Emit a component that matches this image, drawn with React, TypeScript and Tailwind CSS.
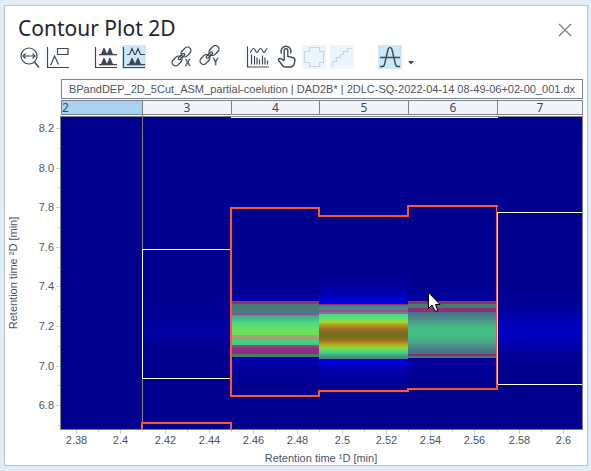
import type { ReactNode } from "react";

const ink = "#3c4856";

function ToolButton({
  label,
  active = false,
  disabled = false,
  children,
}: {
  label: string;
  active?: boolean;
  disabled?: boolean;
  children: ReactNode;
}) {
  const tone = active ? "bg-[#cbe7f8]" : disabled ? "bg-[#ebf5fb]" : "bg-transparent";
  return (
    <button type="button" aria-label={label} disabled={disabled} className={`size-6 shrink-0 ${tone}`}>
      <svg
        viewBox="0 0 24 24"
        className="block size-6"
        fill="none"
        stroke={disabled ? "#c9d6df" : ink}
        strokeWidth={1.2}
      >
        {children}
      </svg>
    </button>
  );
}

const frame = <path d="M1.5 2V22.5H23" />;

function PeakPair({ y }: { y: number }) {
  return (
    <g stroke="none" fill={ink}>
      <path d={`M6.5 ${y}L7.5 ${y - 1.5}L9.5 ${y - 6.5}H10.5L12.5 ${y - 2}L13.5 ${y}z`} />
      <path d={`M12.5 ${y}L13.5 ${y - 2}L15.5 ${y - 6.5}H16.5L18.5 ${y - 1.5}L19.5 ${y}z`} />
      <path d={`M5 ${y - 0.5}H23V${y + 0.8}H5z`} />
    </g>
  );
}

function Chain({ axis, y }: { axis: string; y: number }) {
  return (
    <g transform={`translate(0 ${y})`}>
      <g strokeWidth="1.3">
        <rect x="-5.5" y="-3.5" width="11" height="7" rx="3.5" transform="translate(16 7) rotate(-45)" />
        <rect x="-5.5" y="-3.5" width="11" height="7" rx="3.5" transform="translate(7 16) rotate(-45)" />
        <rect x="-4" y="-1.3" width="8" height="2.6" rx="1.3" transform="translate(11.5 11.5) rotate(-45)" />
      </g>
      <text
        x="15"
        y="21"
        fontSize="9"
        fill={ink}
        stroke={ink}
        strokeWidth="0.4"
        fontFamily="'Noto Sans', sans-serif"
      >
        {axis}
      </text>
    </g>
  );
}

function Toolbar() {
  return (
    <div className="flex gap-6 pl-[13px]">
      <div className="flex gap-1">
        <ToolButton label="Zoom width">
          <circle cx="11" cy="11" r="8" />
          <path d="M5 11H17M7.5 8.5L5 11L7.5 13.5M14.5 8.5L17 11L14.5 13.5" />
          <path d="M16.5 17L21 22.5" strokeWidth="1.5" />
        </ToolButton>
        <ToolButton label="Annotations">
          {frame}
          <path d="M4 19.500H5L8.500 11L12.500 19.500M11.500 3.500H22V9.500H11.500z" />
        </ToolButton>
      </div>
      <div className="flex gap-1">
        <ToolButton label="Filled peaks">
          {frame}
          <PeakPair y={9.5} />
          <PeakPair y={19.5} />
        </ToolButton>
        <ToolButton label="Overlay peaks" active>
          {frame}
          <path d="M5 9.500H7.500L10 3.500L12.500 9.500H13.500L16 3.500L18.500 9.500H23" />
          <PeakPair y={19.5} />
        </ToolButton>
      </div>
      <div className="flex gap-1">
        <ToolButton label="Link X axis">
          <Chain axis="X" y={0} />
        </ToolButton>
        <ToolButton label="Link Y axis">
          <Chain axis="Y" y={-1.5} />
        </ToolButton>
      </div>
      <div className="flex gap-1">
        <ToolButton label="Spectra">
          <path d="M1.500 1.500V22H23" />
          <path d="M4 7.500C5.500 7.500 5.500 3.500 7.500 3.500S9.500 7.500 11 7.500S12.500 3.500 14.500 3.500S16.500 7.500 18 7.500S19.500 3.500 21.500 3.500" />
          <path d="M5.500 9.500V19.500M8.500 11V19.500M11 12.500V19.500M13.500 14.500V19.500M16.500 10.500V19.500M19 12.500V19.500M21.500 15.500V19.500" />
        </ToolButton>
        <ToolButton label="Touch selection">
          <path d="M7.500 8.500A5 5 0 1 1 16.500 8.500" strokeWidth="1.4" />
          <path
            strokeWidth="1.4"
            d="M10.200 15V5.500Q10.200 3.800 12 3.800T13.800 5.500V11.500L18.500 12.500Q21 13 21 15.500L20 19.500Q19 22 16.500 22H11.500Q9.500 22 8.500 20.500L4.500 15.500Q4 13.500 6 13.500T10.200 16"
          />
        </ToolButton>
        <ToolButton label="Merge region" disabled>
          <path d="M7.500 2.500H17.500V6.500H21.500V17.500H17.500V21.500H7.500V17.500H2.500V6.500H7.500z" />
        </ToolButton>
        <ToolButton label="Step region" disabled>
          <path d="M2.500 21.500V16.500H6.500V12.500H10.500V9.500H13.500V6.500H17.500V3.500H22" />
        </ToolButton>
      </div>
      <div className="flex items-end gap-[6px]">
        <ToolButton label="Peak detection" active>
          <path
            strokeWidth="1.4"
            d="M2 21.500H4.500Q6 21.500 6.500 19.500L10 4.500Q10.500 2.500 12 2.500T14 4.500L17.500 19.500Q18 21.500 19.500 21.500H22M2 12.500H22"
          />
        </ToolButton>
        <button type="button" aria-label="Peak detection options" className="pb-1">
          <svg viewBox="0 0 6 4" className="block h-1 w-1.5" fill={ink}>
            <path d="M0 0H6L3 3.500z" />
          </svg>
        </button>
      </div>
    </div>
  );
}

type Stop = [number, string];

const halos: { id: string; x: number; w: number; stops: Stop[] }[] = [
  { id: "h3", x: 143, w: 88, stops: [[290, "#00008f"], [318, "#00009a"], [330, "#0000a4"], [342, "#00009a"], [360, "#00008f"]] },
  { id: "h4", x: 231, w: 88, stops: [[270, "#00008f"], [290, "#000096"], [301, "#0000ac"], [357, "#0000b8"], [368, "#00009c"], [390, "#00008f"]] },
  { id: "h5", x: 319, w: 89, stops: [[262, "#000090"], [284, "#00009c"], [295, "#0000b8"], [304, "#0000f2"], [359, "#0000f2"], [368, "#0000b0"], [388, "#00008f"]] },
  { id: "h6", x: 408, w: 89, stops: [[262, "#00008f"], [285, "#000094"], [301, "#0000a0"], [357, "#0000a8"], [372, "#000096"], [390, "#00008f"]] },
  { id: "h7", x: 497, w: 85, stops: [[285, "#00008f"], [308, "#00009c"], [320, "#0000b4"], [331, "#0000c6"], [342, "#0000b4"], [355, "#000096"], [370, "#00008f"]] },
];

const peaks: { id: string; x: number; w: number; stops: Stop[] }[] = [
  {
    id: "p4", x: 231, w: 88,
    stops: [
      [301, "#96305c"], [304, "#8c3078"], [304, "#467c6c"], [309, "#487a82"], [314, "#467e82"],
      [314, "#8a4c94"], [315, "#8a4c94"], [315, "#44a484"], [323, "#44da86"], [328, "#66e060"],
      [335, "#6ede5c"], [335, "#a0a868"], [340, "#a89880"], [340, "#48da78"], [345, "#46c486"],
      [345, "#8c5490"], [349, "#8e2e80"], [354, "#8e2e80"], [354, "#467c6c"], [357, "#487c74"],
    ],
  },
  {
    id: "p5", x: 319, w: 89,
    stops: [
      [304, "#902c70"], [305, "#902c70"], [305, "#467c80"], [310, "#489484"], [310, "#8c4c90"],
      [314, "#8e7494"], [314, "#40d48c"], [319, "#64e46c"], [322, "#a8d82c"], [325, "#b09c24"],
      [329, "#a86c20"], [333, "#74701e"], [337, "#74701e"], [341, "#a86e20"], [345, "#b0b422"],
      [348, "#84dc40"], [352, "#44dc84"], [355, "#46a884"], [359, "#487c80"],
    ],
  },
  {
    id: "p6", x: 408, w: 89,
    stops: [
      [301, "#96305c"], [304, "#902e74"], [304, "#467c6c"], [308, "#467c6c"], [308, "#902e7c"],
      [312, "#902e7c"], [312, "#48708a"], [319, "#489088"], [328, "#44bc86"], [336, "#44be86"],
      [344, "#489c88"], [351, "#48748a"], [354, "#487088"], [354, "#902e74"], [356, "#902e74"],
      [356, "#467c6c"], [358, "#467c6c"],
    ],
  },
];

function Band({ id, x, w, stops }: { id: string; x: number; w: number; stops: Stop[] }) {
  const top = stops[0][0];
  const bottom = stops[stops.length - 1][0];
  return (
    <>
      <linearGradient id={id} gradientUnits="userSpaceOnUse" x1="0" x2="0" y1={top} y2={bottom}>
        {stops.map(([y, color], i) => (
          <stop key={i} offset={(y - top) / (bottom - top)} stopColor={color} />
        ))}
      </linearGradient>
      <rect x={x} y={top} width={w} height={bottom - top} fill={`url(#${id})`} />
    </>
  );
}

const xLabels = ["2.38", "2.4", "2.42", "2.44", "2.46", "2.48", "2.5", "2.52", "2.54", "2.56", "2.58", "2.6"];
const yLabels = ["8.2", "8.0", "7.8", "7.6", "7.4", "7.2", "7.0", "6.8"];
const xAt = (i: number) => Math.round(76 + i * 44.27) + 0.5;
const yAt = (i: number) => Math.round(128 + i * 39.6) + 0.5;

function ContourChart() {
  return (
    <svg
      viewBox="5 115 582 350"
      className="block h-auto w-full"
      fontFamily="'Liberation Sans', Arial, sans-serif"
      fontSize="11"
      role="img"
      aria-label="Contour Plot 2D"
    >
      <g shapeRendering="crispEdges">
        <rect x="60" y="116" width="523" height="314" fill="#7d8290" />
        <rect x="61" y="117" width="521" height="312" fill="#00008f" />
        {halos.map((b) => (
          <Band key={b.id} {...b} />
        ))}
        {peaks.map((b) => (
          <Band key={b.id} {...b} />
        ))}
        <path d="M142.500 115V429" stroke="#808080" />
        <g fill="none" stroke="#ffffff">
          <path d="M231 249.500H142.500V378.500H231" />
          <path d="M582 212.500H497.500V384.500H582" />
          <path d="M231 117.500H498" />
        </g>
        <g fill="none" stroke="#ff5533" strokeWidth="2">
          <path d="M497 207V206H408V216H319V208H231V396H319V391H408V389H497V384" />
          <path d="M142 429V423H231V429" />
        </g>
        <path d="M496.500 206V389" stroke="#ff5533" />
        <g stroke="#c9d0d8">
          {xLabels.map((t, i) => (
            <path key={t} d={`M${xAt(i)} 430V434${i < 11 ? `M${xAt(i + 0.5)} 430V432` : ""}`} />
          ))}
          {yLabels.map((t, i) => (
            <path key={t} d={`M56 ${yAt(i)}H60M58 ${yAt(i + 0.5)}H60`} />
          ))}
        </g>
      </g>
      <g fill="#4c5566">
        {xLabels.map((t, i) => (
          <text key={t} x={xAt(i)} y="444" textAnchor="middle">
            {t}
          </text>
        ))}
        {yLabels.map((t, i) => (
          <text key={t} x="54" y={yAt(i) + 3.5} textAnchor="end">
            {t}
          </text>
        ))}
        <text x="321" y="462" textAnchor="middle">
          Retention time ¹D [min]
        </text>
        <text transform="translate(17 273) rotate(-90)" textAnchor="middle">
          Retention time ²D [min]
        </text>
      </g>
      <path
        d="M428.500 292.500V308.500L432 305L435 311H438L435.500 304.500H440z"
        fill="#ffffff"
        stroke="#000000"
      />
    </svg>
  );
}

export default function App() {
  return (
    <div className="bg-[#e1edf5] pt-[5px] pr-[3px] pb-[5px] pl-1 font-['Liberation_Sans',Arial,sans-serif] text-[11px] text-[#4c5566]">
      <section className="border border-[#bfc4c8] bg-white">
        <header className="flex h-[39px] items-center justify-between pt-1 pr-[15px] pl-[13px]">
          <h1 className="font-['Noto_Sans','Open_Sans',sans-serif] text-[21px] leading-7 text-[#20262e]">
            Contour Plot 2D
          </h1>
          <button type="button" aria-label="Close" className="pt-[5px]">
            <svg viewBox="0 0 14 14" className="block size-3.5" stroke="#737c88" strokeWidth="1.200">
              <path d="M1 1L13 13M13 1L1 13" />
            </svg>
          </button>
        </header>
        <Toolbar />
        <div className="mt-[10px] mr-1 ml-[56px]">
          <div className="h-5 overflow-hidden border border-[#7d8290] text-center leading-[19px] whitespace-nowrap">
            BPandDEP_2D_5Cut_ASM_partial-coelution | DAD2B* | 2DLC-SQ-2022-04-14 08-49-06+02-00_001.dx
          </div>
          <div className="mt-px grid grid-cols-[80fr_89fr_88fr_89fr_89fr_85fr] border border-[#7d8290] bg-[#f0f3f9] text-center font-['Noto_Sans',sans-serif] text-[12px] leading-[13px] text-[#3c4856]">
            <span className="bg-[#a5d3f0] text-left">2</span>
            {["3", "4", "5", "6", "7"].map((n) => (
              <span key={n} className="border-l border-[#808080]">
                {n}
              </span>
            ))}
          </div>
        </div>
        <ContourChart />
      </section>
    </div>
  );
}
